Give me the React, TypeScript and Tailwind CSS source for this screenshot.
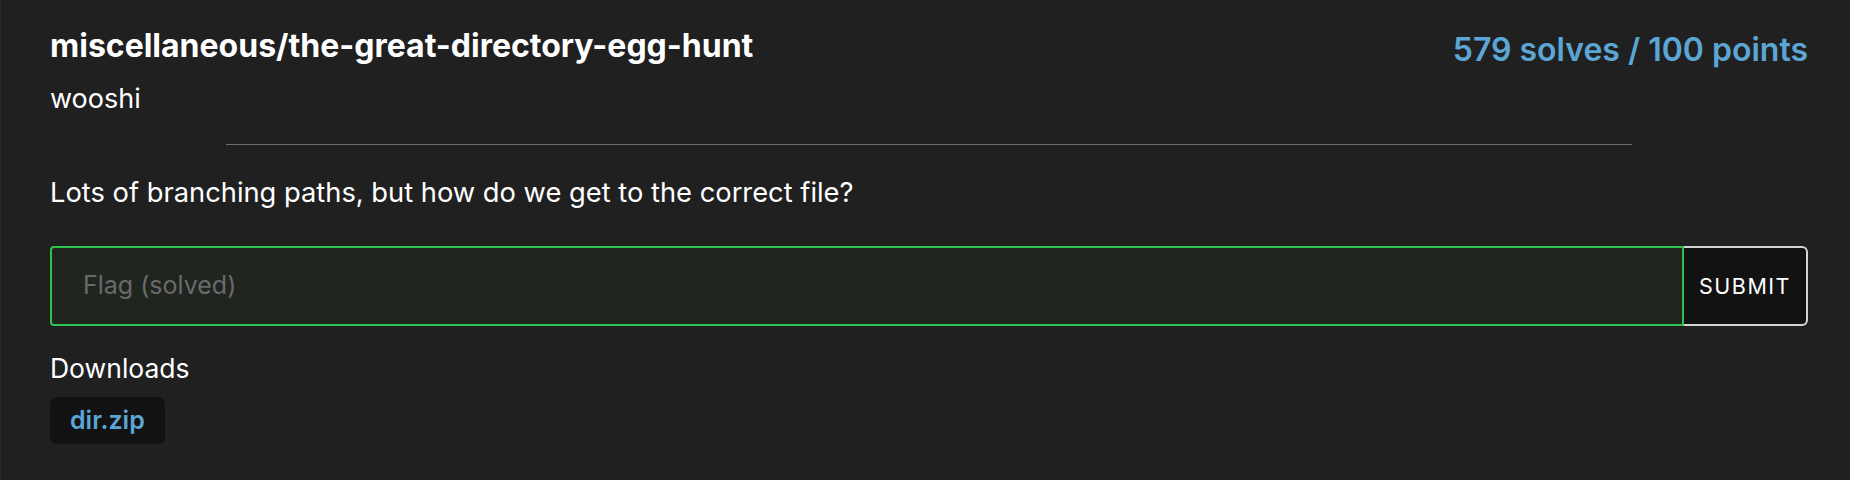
export default function App() {
  return (
    <main className="min-h-screen border-l border-[#2b2b2b] bg-[#202020] font-['Inter','Liberation_Sans',sans-serif] text-white">
      <div className="pl-[49px] pr-[42px] pt-[26px] pb-[36px]">
        <header className="flex items-start justify-between">
          <div>
            <h1 className="text-[32px] leading-[40px] font-bold">
              miscellaneous/the-great-directory-egg-hunt
            </h1>
            <p className="mt-[16px] text-[27px] leading-[34px]">wooshi</p>
          </div>
          <span className="mt-[4px] text-[32px] leading-[40px] font-semibold text-[#5ca6d6]">
            579 solves / 100 points
          </span>
        </header>

        <div className="mx-auto mt-[28px] h-px w-4/5 bg-[#6e6e6e]" />

        <p className="mt-[31px] text-[27.3px] leading-[34px]">
          Lots of branching paths, but how do we get to the correct file?
        </p>

        <form className="mt-[36px] flex h-[80px]" onSubmit={(e) => e.preventDefault()}>
          <input
            className="min-w-0 flex-1 rounded-l-[4px] border-2 border-[#2fc24f] bg-[#20251f] px-[31px] text-[25px] text-white outline-none placeholder:text-[#6a6a6a]"
            placeholder="Flag (solved)"
          />
          <button
            className="w-[124px] rounded-r-[6px] border-2 border-l-0 border-[#d4d4d4] bg-[#121212] text-[21.5px] tracking-[0.07em] text-white"
            type="submit"
          >
            SUBMIT
          </button>
        </form>

        <h2 className="mt-[25px] text-[26.5px] leading-[34px]">Downloads</h2>
        <a
          className="mt-[12px] inline-flex h-[47px] items-center rounded-[7px] bg-[#121212] px-[20px] text-[25px] font-semibold text-[#5ca6d6]"
          href="#"
        >
          dir.zip
        </a>
      </div>
    </main>
  );
}
